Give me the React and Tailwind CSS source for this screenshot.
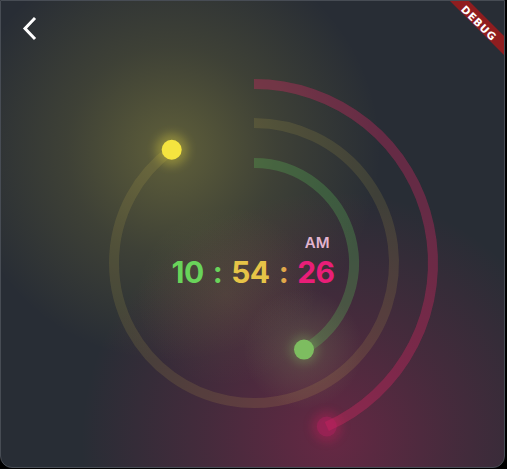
import React from "react";

const CX = 253;
const CY = 262;

function pt(r, deg) {
  const a = (deg * Math.PI) / 180;
  return [CX + r * Math.sin(a), CY - r * Math.cos(a)];
}

function arcPath(r, deg) {
  const [x, y] = pt(r, deg);
  const large = deg > 180 ? 1 : 0;
  return `M ${CX} ${CY - r} A ${r} ${r} 0 ${large} 1 ${x.toFixed(2)} ${y.toFixed(2)}`;
}

export default function App() {
  const [gx, gy] = pt(100, 150);
  const [yx, yy] = pt(140, 324);
  const [px, py] = pt(179, 156);
  return (
    <div className="w-[507px] h-[469px] bg-black overflow-hidden">
      <div
        className="relative w-[505px] h-[468px] bg-[#282d35] border border-[#474c54] rounded-b-[12px] overflow-hidden"
        style={{ fontFamily: "Inter, 'Noto Sans', sans-serif" }}
      >
        <svg className="absolute inset-0" width="505" height="468" viewBox="0 0 505 468">
          <defs>
            <radialGradient id="gy" cx="170" cy="150" r="210" gradientUnits="userSpaceOnUse">
              <stop offset="0" stopColor="#fff04a" stopOpacity="0.26" />
              <stop offset="0.5" stopColor="#f0e040" stopOpacity="0.11" />
              <stop offset="1" stopColor="#f0e040" stopOpacity="0" />
            </radialGradient>
            <radialGradient id="gp" cx="330" cy="440" r="250" gradientUnits="userSpaceOnUse">
              <stop offset="0" stopColor="#e91e63" stopOpacity="0.32" />
              <stop offset="0.5" stopColor="#e91e63" stopOpacity="0.15" />
              <stop offset="1" stopColor="#e91e63" stopOpacity="0" />
            </radialGradient>
            <radialGradient id="gg" cx="302" cy="348" r="60" gradientUnits="userSpaceOnUse">
              <stop offset="0" stopColor="#a0d070" stopOpacity="0.18" />
              <stop offset="1" stopColor="#a0d070" stopOpacity="0" />
            </radialGradient>
            <radialGradient id="gt" cx="225" cy="295" r="90" gradientUnits="userSpaceOnUse">
              <stop offset="0" stopColor="#e8c860" stopOpacity="0.08" />
              <stop offset="1" stopColor="#e8c860" stopOpacity="0" />
            </radialGradient>
            <filter id="blur6" x="-100%" y="-100%" width="300%" height="300%">
              <feGaussianBlur stdDeviation="5" />
            </filter>
          </defs>
          <rect x="0" y="0" width="505" height="468" fill="url(#gy)" />
          <rect x="0" y="0" width="505" height="468" fill="url(#gp)" />
          <rect x="0" y="0" width="505" height="468" fill="url(#gt)" />
          <rect x="0" y="0" width="505" height="468" fill="url(#gg)" />

          <path d={arcPath(179, 156)} fill="none" stroke="#e0306a" strokeOpacity="0.24" strokeWidth="10" />
          <path d={arcPath(140, 324)} fill="none" stroke="#e8d050" strokeOpacity="0.12" strokeWidth="10" />
          <path d={arcPath(100, 150)} fill="none" stroke="#5cc35a" strokeOpacity="0.28" strokeWidth="10" />

          <circle cx={yx} cy={yy} r="16" fill="#f5e53f" opacity="0.3" filter="url(#blur6)" />
          <circle cx={yx} cy={yy} r="10" fill="#f5e43f" />
          <circle cx={gx} cy={gy} r="14" fill="#86c865" opacity="0.25" filter="url(#blur6)" />
          <circle cx={gx} cy={gy} r="10" fill="#7dbd60" />
          <circle cx={px} cy={py} r="15" fill="#e91e63" opacity="0.25" filter="url(#blur6)" />
          <circle cx={px} cy={py} r="10" fill="#b81f64" opacity="0.38" />
          <path d={arcPath(179, 156)} fill="none" stroke="#e91e63" strokeOpacity="0.12" strokeWidth="10" />
        </svg>

        <div className="absolute inset-0 flex items-center justify-center pl-px pt-[53px]">
          <div className="flex flex-col items-end">
            <div className="text-[15px] leading-none font-semibold text-[#e2b4cf] mr-[5px] mb-[7px]">AM</div>
            <div className="flex items-baseline text-[30px] leading-none font-bold tracking-[-0.5px]">
              <span className="text-[#69d45a]">10</span>
              <span className="text-[#69d45a] mx-[9px]">:</span>
              <span className="text-[#e6c447]">54</span>
              <span className="text-[#e0a84a] mx-[9px]">:</span>
              <span className="text-[#e91e78]">26</span>
            </div>
          </div>
        </div>

        <button className="absolute left-[16px] top-[12px] w-[28px] h-[32px] flex items-center justify-center">
          <svg width="28" height="32" viewBox="0 0 28 32">
            <polyline points="17,6 8,15.5 17,25" fill="none" stroke="#ffffff" strokeWidth="3" strokeLinecap="square" strokeLinejoin="miter" />
          </svg>
        </button>

        <svg className="absolute right-0 top-0" width="60" height="60" viewBox="0 0 60 60">
          <polygon points="5,-1 24,-1 61,36 61,55" fill="#8f1d1f" />
          <text
            x="35"
            y="22"
            transform="rotate(45 35 22)"
            textAnchor="middle"
            dominantBaseline="central"
            fill="#ffffff"
            fontSize="10.5"
            fontWeight="900"
            fontFamily="'DejaVu Sans', sans-serif"
            letterSpacing="0.8"
          >
            DEBUG
          </text>
        </svg>
      </div>
    </div>
  );
}
